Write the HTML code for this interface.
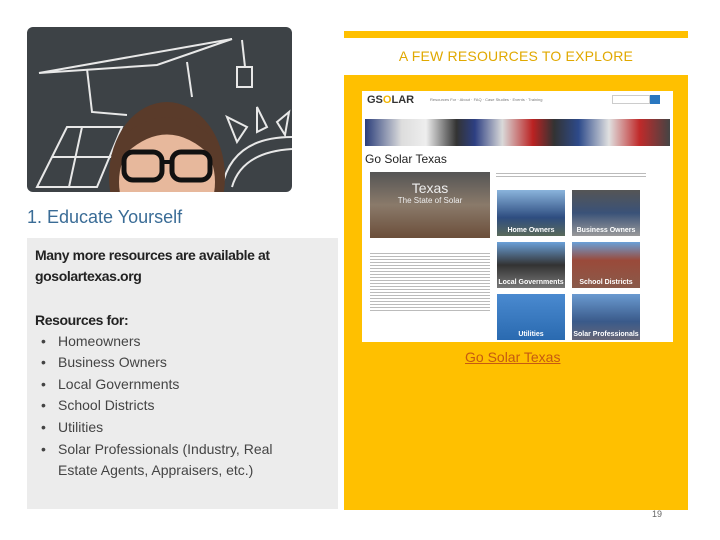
<!DOCTYPE html>
<html><head><meta charset="utf-8"><style>
*{margin:0;padding:0;box-sizing:border-box}
body{width:720px;height:540px;background:#fff;position:relative;overflow:hidden;font-family:"Liberation Sans",sans-serif}
.abs{position:absolute}
#photo{left:27px;top:27px;width:265px;height:165px;border-radius:6px;background:#3d4246;overflow:hidden}
#title{left:27px;top:207px;font-size:18px;color:#3a6c96}
#gray{left:27px;top:238px;width:311px;height:271px;background:#ececec}
.t{position:absolute;left:8px;font-family:"Liberation Sans",sans-serif;font-size:14px;color:#444;white-space:nowrap}
.b{font-weight:bold;font-size:14px;letter-spacing:-0.4px;color:#222}
.bul{position:absolute;left:6px}
#ybar{left:344px;top:31px;width:344px;height:7px;background:#ffc000}
#head{left:344px;top:48px;width:344px;text-align:center;font-size:14px;color:#e0a800;letter-spacing:0.2px}
#ybox{left:344px;top:75px;width:344px;height:435px;background:#ffc000}
#shot{left:362px;top:91px;width:311px;height:251px;background:#fff;overflow:hidden}
#link{left:465px;top:349px;font-size:14px;color:#c55a11;text-decoration:underline}
#pg{left:652px;top:509px;font-size:9px;color:#666}
.tile{position:absolute;width:68px;height:46px;color:#fff;font-size:7px;font-weight:bold;display:flex;align-items:flex-end;justify-content:center;padding-bottom:2px}
</style></head><body>
<div id="photo" class="abs">
<svg width="265" height="165" viewBox="0 0 265 165">
<g fill="none" stroke="#e8e8e8" stroke-width="2">
<path d="M12 46 L205 12 L130 38 Z"/><path d="M60 42 L65 85 L100 88"/><path d="M160 35 L165 70"/>
<path d="M215 13 L218 40"/><path d="M210 40 h15 v20 h-15z"/>
<path d="M10 160 L40 100 L95 100 L70 160 Z"/><path d="M25 130 H85 M55 100 L42 160"/>
<path d="M195 160 Q205 110 265 110"/><path d="M205 160 Q215 125 265 122"/>
<path d="M200 90 L210 115 L220 100 Z"/><path d="M230 80 L230 105 L240 100 Z"/><path d="M250 95 L262 85 L258 108 Z"/>
</g>
<ellipse cx="140" cy="150" rx="58" ry="75" fill="#5a3b2a"/>
<ellipse cx="140" cy="155" rx="48" ry="55" fill="#e7b89c"/>
<path d="M95 130 Q140 85 185 130 L185 110 Q140 70 95 110Z" fill="#5a3b2a"/>
<rect x="97" y="125" width="38" height="28" rx="9" fill="none" stroke="#111" stroke-width="5"/>
<rect x="145" y="125" width="38" height="28" rx="9" fill="none" stroke="#111" stroke-width="5"/>
<path d="M135 135 h10" stroke="#111" stroke-width="4"/>
</svg></div>
<div id="title" class="abs">1. Educate Yourself</div>
<div id="gray" class="abs">
<div class="t b" style="top:9px">Many more resources are available at</div>
<div class="t b" style="top:30px">gosolartexas.org</div>
<div class="t b" style="top:74px">Resources for:</div>
<div class="t" style="top:95px"><span class="bul">•</span><span style="margin-left:23px">Homeowners</span></div>
<div class="t" style="top:116px"><span class="bul">•</span><span style="margin-left:23px">Business Owners</span></div>
<div class="t" style="top:138px"><span class="bul">•</span><span style="margin-left:23px">Local Governments</span></div>
<div class="t" style="top:159px"><span class="bul">•</span><span style="margin-left:23px">School Districts</span></div>
<div class="t" style="top:181px"><span class="bul">•</span><span style="margin-left:23px">Utilities</span></div>
<div class="t" style="top:203px"><span class="bul">•</span><span style="margin-left:23px">Solar Professionals (Industry, Real</span></div>
<div class="t" style="top:224px"><span style="margin-left:23px">Estate Agents, Appraisers, etc.)</span></div>
</div>
<div id="ybar" class="abs"></div>
<div id="head" class="abs">A FEW RESOURCES TO EXPLORE</div>
<div id="ybox" class="abs"></div>
<div id="shot" class="abs">
<div class="abs" style="left:5px;top:3px;font-size:11px;font-weight:bold;color:#333">GS<span style="color:#f0b400">O</span>LAR</div>
<div class="abs" style="left:68px;top:6px;font-size:4px;color:#777">Resources For · About · FAQ · Case Studies · Events · Training</div>
<div class="abs" style="left:250px;top:4px;width:38px;height:9px;border:1px solid #ccc"></div>
<div class="abs" style="left:288px;top:4px;width:10px;height:9px;background:#2a77c0"></div>
<div class="abs" style="left:3px;top:28px;width:305px;height:27px;background:linear-gradient(90deg,#2b3e7a 0,#ddd 12%,#eee 20%,#333 30%,#2d3f82 36%,#d9d9d9 45%,#b22 55%,#333 62%,#2d4a8a 70%,#e0e0e0 80%,#c02a2a 90%,#444 100%)"></div>
<div class="abs" style="left:3px;top:61px;font-size:12px;color:#222">Go Solar Texas</div>
<div class="abs" style="left:8px;top:81px;width:120px;height:66px;background:linear-gradient(#555 0,#8a7a6a 50%,#6b4e3a 100%);color:#eee;font-size:14px;text-align:center;padding-top:8px">Texas<div style="font-size:8px">The State of Solar</div></div>
<div class="abs" style="left:8px;top:160px;width:120px;height:60px;background:repeating-linear-gradient(#fff 0,#fff 2px,#bbb 2px,#bbb 3px)"></div>
<div class="abs" style="left:134px;top:80px;width:150px;height:8px;background:repeating-linear-gradient(#fff 0,#fff 2px,#bbb 2px,#bbb 3px)"></div>
<div class="tile" style="left:135px;top:99px;background:linear-gradient(#8ab4dc,#2e4d80 60%,#5a6a5a)">Home Owners</div>
<div class="tile" style="left:210px;top:99px;background:linear-gradient(#555,#3a5278 50%,#999)">Business Owners</div>
<div class="tile" style="left:135px;top:151px;background:linear-gradient(#6aa0d8,#333 50%,#777)">Local Governments</div>
<div class="tile" style="left:210px;top:151px;background:linear-gradient(#6aa0d8,#9a4a3a 40%,#8a5a4a)">School Districts</div>
<div class="tile" style="left:135px;top:203px;background:linear-gradient(#4a8ad0,#2a6ab0)">Utilities</div>
<div class="tile" style="left:210px;top:203px;background:linear-gradient(#6a9ad0,#3a5a8a 60%,#667)">Solar Professionals</div>
</div>
<div id="link" class="abs">Go Solar Texas</div>
<div id="pg" class="abs">19</div>
</body></html>
